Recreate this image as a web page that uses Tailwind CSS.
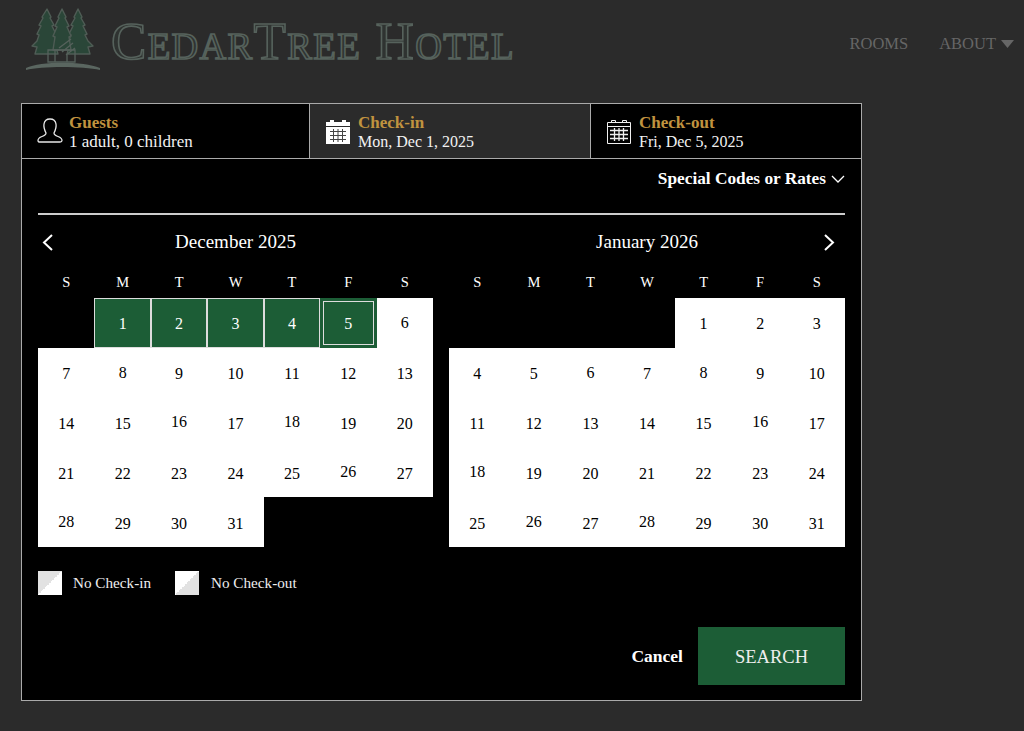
<!DOCTYPE html>
<html lang="en">
<head>
    <meta charset="UTF-8">
    <title>CedarTree Hotel</title>
    <script src="https://cdn.jsdelivr.net/npm/@tailwindcss/browser@4"></script>
</head>
<body class="bg-[#2b2b2b] h-[731px] w-[1024px] overflow-hidden font-['Liberation_Serif',serif]">

    <!-- Header -->
    <header class="h-[103px] flex items-start justify-between">
        <div class="flex items-start pl-[25px] pt-[8px]">
            <svg width="76" height="63" viewBox="0 0 76 63">
                <g fill="#2a4638" stroke="#4f5c55" stroke-width="1.4" stroke-linejoin="round">
                    <path d="M22 1 L26 9 L25 10 L29 17 L27 18 L31 26 L29 27 L32 34 L36 38 L31 39 L33 46 L10 46 L12 39 L7 38 L12 33 L14 27 L12 26 L16 18 L14 17 L18 10 L17 9Z"/>
                    <path d="M53 1 L57 9 L56 10 L60 17 L58 18 L62 26 L60 27 L63 33 L68 38 L63 39 L65 46 L42 46 L44 39 L39 38 L43 34 L46 27 L44 26 L48 18 L46 17 L50 10 L49 9Z"/>
                    <path d="M37 1 L41 9 L40 10 L44 18 L42 19 L46 28 L44 29 L46 42 L28 42 L30 29 L28 28 L32 19 L30 18 L34 10 L33 9Z"/>
                </g>
                <path fill="none" stroke="#56625c" stroke-width="1.3" d="M23 42 H50 V54 H23 Z M34 40 L46 31 M37 44 L48 35 M41 47 L50 40 M30 42 V54 M42 47 V54"/>
                <path fill="#5a6660" d="M1 60 C16 53 58 53 75 60 L75 62 C58 58 16 58 1 62Z"/>
            </svg>
            <span class="ml-[10px] mt-[5px] text-[53px] leading-[56px] [font-variant-caps:small-caps] tracking-[1.3px] whitespace-nowrap text-[#2f3331] [-webkit-text-stroke:1.6px_#56625c]">CedarTree Hotel</span>
        </div>
        <nav class="flex items-center gap-[31px] pt-[34px] pr-[10px] text-[16.5px] leading-[20px] text-[#666666]">
            <a>ROOMS</a>
            <a class="flex items-center gap-[5px]">ABOUT
                <svg width="13" height="8" viewBox="0 0 13 8"><path fill="#666666" d="M0 0H13L6.500 8Z"/></svg>
            </a>
        </nav>
    </header>

    <!-- Booking panel -->
    <main class="ml-[21px] w-[841px] h-[598px] bg-black border border-[#aaaaaa] text-white flex flex-col">

        <!-- Tabs -->
        <div class="h-[55px] shrink-0 flex border-b border-[#aaaaaa]">
            <div class="w-[288px] flex items-center gap-[6px] pl-[15px] border-r border-[#aaaaaa]">
                <svg width="26" height="26" viewBox="0 0 26 26" fill="none" stroke="#e8e8e8" stroke-width="1.3"><path d="M9 15 C7 11 6.500 9 7 6 C7.500 2.500 10 1 13 1 C16 1 18.500 2.500 19 6 C19.500 9 19 11 17 15 C17 17 18 17.500 21 18.500 C24 19.500 25 20.500 25 22.500 C25 23.500 24.500 24 23 24 H3 C1.500 24 1 23.500 1 22.500 C1 20.500 2 19.500 5 18.500 C8 17.500 9 17 9 15Z"/></svg>
                <div class="text-[17px] leading-[19px] pt-[1px]">
                    <div class="font-bold text-[#c0933f]">Guests</div>
                    <div class="text-[#f2f2f2]">1 adult, 0 children</div>
                </div>
            </div>
            <div class="w-[281px] flex items-center gap-[8px] pl-[16px] bg-[#2b2b2b] border-r border-[#aaaaaa]">
                <svg width="24" height="25" viewBox="0 0 24 25">
                    <path fill="#fff" d="M0 3H4V1H8V3H16V1H20V3H24V25H0Z"/>
                    <path fill="none" stroke="#2b2b2b" stroke-width="1" d="M0 7.500H24"/>
                    <path fill="none" stroke="#444" stroke-width="1" d="M4 12.500H20M4 16.500H20M4 20.500H20M7.500 10V23M12 10V23M16.500 10V23"/>
                </svg>
                <div class="text-[17px] leading-[19px] pt-[1px]">
                    <div class="font-bold text-[#c0933f]">Check-in</div>
                    <div class="text-[16px] text-[#f2f2f2]">Mon, Dec 1, 2025</div>
                </div>
            </div>
            <div class="flex-1 flex items-center gap-[8px] pl-[16px]">
                <svg width="24" height="25" viewBox="0 0 24 25" fill="none" stroke="#f0f0f0" stroke-width="1">
                    <path d="M0.500 3.500H23.500V24.500H0.500ZM0.500 7.500H23.500M4.500 3.500V1.500H8.500V3.500M15.500 3.500V1.500H19.500V3.500"/>
                    <path stroke-width="1.300" d="M3 11.500H21M3 15.500H21M3 19.500H21M7.500 9V22M12 9V22M16.500 9V22"/>
                </svg>
                <div class="text-[17px] leading-[19px] pt-[1px]">
                    <div class="font-bold text-[#c0933f]">Check-out</div>
                    <div class="text-[16px] text-[#f2f2f2]">Fri, Dec 5, 2025</div>
                </div>
            </div>
        </div>

        <div class="px-[16px] flex-1 flex flex-col">
            <!-- Special codes -->
            <div class="h-[56px] shrink-0 border-b-2 border-[#cccccc] flex justify-end items-start pt-[10px] gap-[5px] font-bold text-[17.3px] leading-[20px]">
                Special Codes or Rates
                <svg class="mt-[6px]" width="14" height="8" viewBox="0 0 14 8" fill="none" stroke="#fff" stroke-width="1.300"><path d="M1 1L7 7L13 1"/></svg>
            </div>

            <!-- Calendars -->
            <div class="flex gap-[16px] mt-[11px]">
                <section class="w-[395px]">
                    <div class="h-[32px] relative flex items-center justify-center text-[19px]">
                        <svg class="absolute left-[4px] top-[8px]" width="11" height="17" viewBox="0 0 11 17" fill="none" stroke="#fff" stroke-width="2"><path d="M10 1L2 8.500L10 16"/></svg>
                        December 2025
                    </div>
                    <div class="grid grid-cols-7 h-[40px] items-center text-center text-[14.5px] pt-[10px]">
                        <span>S</span><span>M</span><span>T</span><span>W</span><span>T</span><span>F</span><span>S</span>
                    </div>
                    <div class="grid grid-cols-7 auto-rows-[49.8px] text-center text-[16px] text-black">
                        <div></div>
                        <div class="bg-[#1c5d36] text-white border border-[#dddddd] flex items-center justify-center pt-[2px]">1</div>
                        <div class="bg-[#1c5d36] text-white border border-[#dddddd] flex items-center justify-center pt-[2px]">2</div>
                        <div class="bg-[#1c5d36] text-white border border-[#dddddd] flex items-center justify-center pt-[2px]">3</div>
                        <div class="bg-[#1c5d36] text-white border border-[#dddddd] flex items-center justify-center pt-[2px]">4</div>
                        <div class="bg-[#1c5d36] text-white border-[3px] border-[#1c5d36] outline outline-1 -outline-offset-4 outline-[#dddddd] flex items-center justify-center pt-[2px]">5</div>
                        <div class="bg-white flex items-center justify-center">6</div>
                        <div class="bg-white flex items-center justify-center pt-[3px]">7</div>
                        <div class="bg-white flex items-center justify-center">8</div>
                        <div class="bg-white flex items-center justify-center pt-[3px]">9</div>
                        <div class="bg-white flex items-center justify-center pt-[3px]">10</div>
                        <div class="bg-white flex items-center justify-center pt-[3px]">11</div>
                        <div class="bg-white flex items-center justify-center pt-[3px]">12</div>
                        <div class="bg-white flex items-center justify-center pt-[3px]">13</div>
                        <div class="bg-white flex items-center justify-center pt-[3px]">14</div>
                        <div class="bg-white flex items-center justify-center pt-[3px]">15</div>
                        <div class="bg-white flex items-center justify-center">16</div>
                        <div class="bg-white flex items-center justify-center pt-[3px]">17</div>
                        <div class="bg-white flex items-center justify-center">18</div>
                        <div class="bg-white flex items-center justify-center pt-[3px]">19</div>
                        <div class="bg-white flex items-center justify-center pt-[3px]">20</div>
                        <div class="bg-white flex items-center justify-center pt-[3px]">21</div>
                        <div class="bg-white flex items-center justify-center pt-[3px]">22</div>
                        <div class="bg-white flex items-center justify-center pt-[3px]">23</div>
                        <div class="bg-white flex items-center justify-center pt-[3px]">24</div>
                        <div class="bg-white flex items-center justify-center pt-[3px]">25</div>
                        <div class="bg-white flex items-center justify-center">26</div>
                        <div class="bg-white flex items-center justify-center pt-[3px]">27</div>
                        <div class="bg-white flex items-center justify-center">28</div>
                        <div class="bg-white flex items-center justify-center pt-[3px]">29</div>
                        <div class="bg-white flex items-center justify-center pt-[3px]">30</div>
                        <div class="bg-white flex items-center justify-center pt-[3px]">31</div>
                    </div>
                </section>
                <section class="w-[396px]">
                    <div class="h-[32px] relative flex items-center justify-center text-[19px]">
                        January 2026
                        <svg class="absolute right-[10px] top-[8px]" width="11" height="17" viewBox="0 0 11 17" fill="none" stroke="#fff" stroke-width="2"><path d="M1 1L9 8.500L1 16"/></svg>
                    </div>
                    <div class="grid grid-cols-7 h-[40px] items-center text-center text-[14.5px] pt-[10px]">
                        <span>S</span><span>M</span><span>T</span><span>W</span><span>T</span><span>F</span><span>S</span>
                    </div>
                    <div class="grid grid-cols-7 auto-rows-[49.8px] text-center text-[16px] text-black">
                        <div></div><div></div><div></div><div></div>
                        <div class="bg-white flex items-center justify-center pt-[3px]">1</div>
                        <div class="bg-white flex items-center justify-center pt-[3px]">2</div>
                        <div class="bg-white flex items-center justify-center pt-[3px]">3</div>
                        <div class="bg-white flex items-center justify-center pt-[3px]">4</div>
                        <div class="bg-white flex items-center justify-center pt-[3px]">5</div>
                        <div class="bg-white flex items-center justify-center">6</div>
                        <div class="bg-white flex items-center justify-center pt-[3px]">7</div>
                        <div class="bg-white flex items-center justify-center">8</div>
                        <div class="bg-white flex items-center justify-center pt-[3px]">9</div>
                        <div class="bg-white flex items-center justify-center pt-[3px]">10</div>
                        <div class="bg-white flex items-center justify-center pt-[3px]">11</div>
                        <div class="bg-white flex items-center justify-center pt-[3px]">12</div>
                        <div class="bg-white flex items-center justify-center pt-[3px]">13</div>
                        <div class="bg-white flex items-center justify-center pt-[3px]">14</div>
                        <div class="bg-white flex items-center justify-center pt-[3px]">15</div>
                        <div class="bg-white flex items-center justify-center">16</div>
                        <div class="bg-white flex items-center justify-center pt-[3px]">17</div>
                        <div class="bg-white flex items-center justify-center">18</div>
                        <div class="bg-white flex items-center justify-center pt-[3px]">19</div>
                        <div class="bg-white flex items-center justify-center pt-[3px]">20</div>
                        <div class="bg-white flex items-center justify-center pt-[3px]">21</div>
                        <div class="bg-white flex items-center justify-center pt-[3px]">22</div>
                        <div class="bg-white flex items-center justify-center pt-[3px]">23</div>
                        <div class="bg-white flex items-center justify-center pt-[3px]">24</div>
                        <div class="bg-white flex items-center justify-center pt-[3px]">25</div>
                        <div class="bg-white flex items-center justify-center">26</div>
                        <div class="bg-white flex items-center justify-center pt-[3px]">27</div>
                        <div class="bg-white flex items-center justify-center">28</div>
                        <div class="bg-white flex items-center justify-center pt-[3px]">29</div>
                        <div class="bg-white flex items-center justify-center pt-[3px]">30</div>
                        <div class="bg-white flex items-center justify-center pt-[3px]">31</div>
                    </div>
                </section>
            </div>

            <!-- Legend -->
            <div class="flex items-center mt-[24px] text-[15.2px] text-[#eeeeee]">
                <span class="w-[24px] h-[24px] bg-[linear-gradient(to_bottom_right,#e2e2e2_50%,#ffffff_50%)]"></span>
                <span class="ml-[11px] w-[102px]">No Check-in</span>
                <span class="w-[24px] h-[24px] bg-[linear-gradient(to_bottom_right,#ffffff_50%,#e2e2e2_50%)]"></span>
                <span class="ml-[12px]">No Check-out</span>
            </div>

            <!-- Actions -->
            <div class="flex justify-end items-center gap-[15px] mt-[32px]">
                <button class="font-bold text-[17.5px]">Cancel</button>
                <button class="w-[147px] h-[58px] pt-[4px] bg-[#1c5d36] text-[18.5px] text-[#eeeeee]">SEARCH</button>
            </div>
        </div>
    </main>
</body>
</html>
